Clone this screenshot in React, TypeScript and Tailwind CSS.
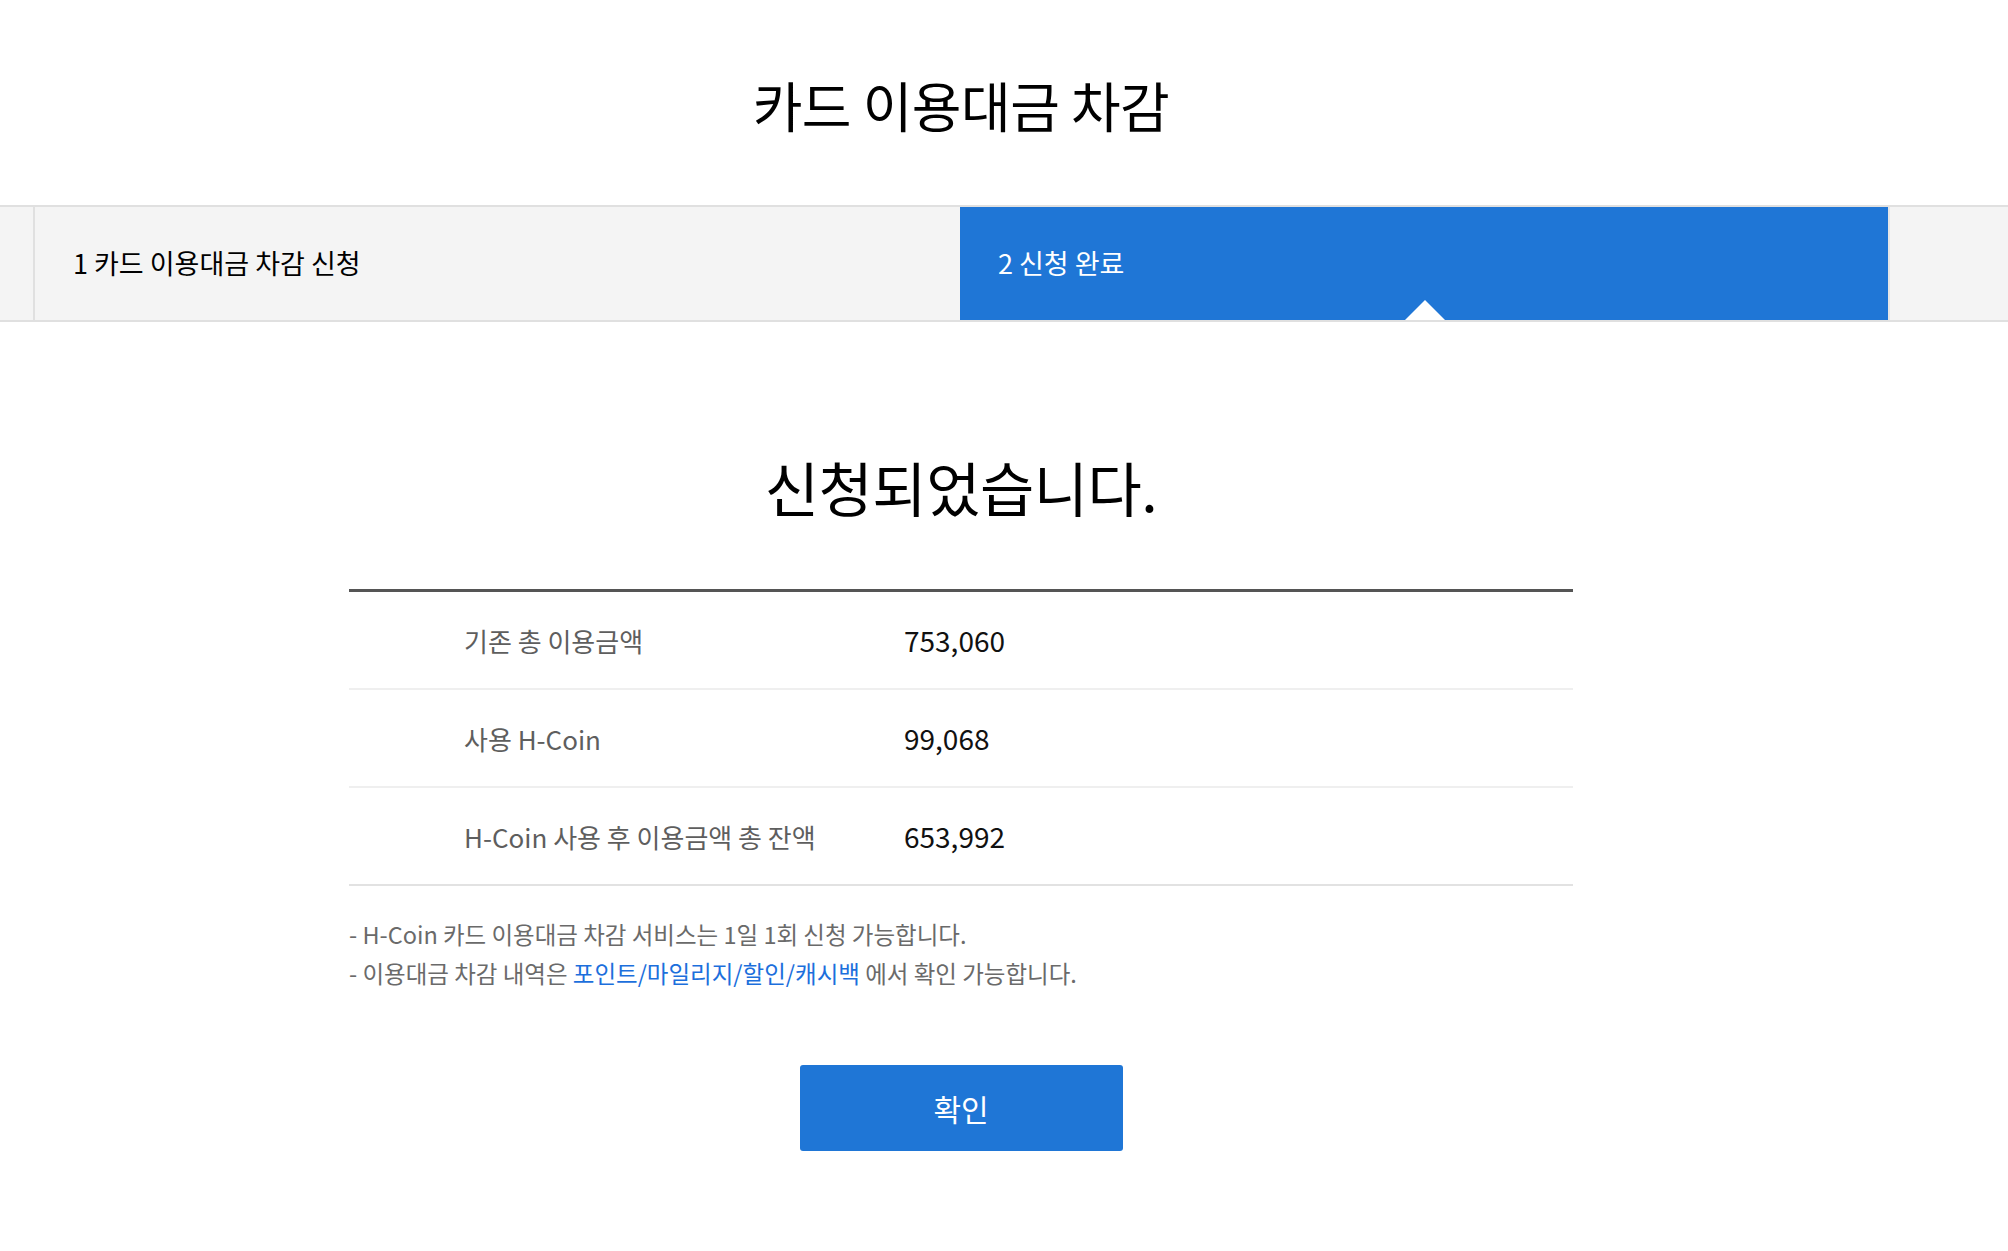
import React from "react";

const rows = [
  { label: "기존 총 이용금액", value: "753,060" },
  { label: "사용 H-Coin", value: "99,068" },
  { label: "H-Coin 사용 후 이용금액 총 잔액", value: "653,992" },
];

export default function App() {
  return (
    <div className="min-h-screen bg-white font-['Noto_Sans_CJK_KR','Noto_Sans',sans-serif] text-[#111]">
      <header className="flex h-[205px] w-[1922px] items-center justify-center pt-1">
        <h1 className="text-[54px] font-normal leading-none tracking-[-0.5px] text-black">카드 이용대금 차감</h1>
      </header>

      {/* steps */}
      <div className="border-y-2 border-[#e0e0e0] bg-[#f4f4f4]">
        <div className="flex w-[1922px] pl-[33px]">
          <div className="flex h-[113px] w-[927px] items-center border-l-2 border-[#e0e0e0] pl-[38px] text-[27px] text-black">
            1 카드 이용대금 차감 신청
          </div>
          <div className="relative flex h-[113px] w-[930px] items-center border-r-2 border-[#e6e6e6] bg-[#1f76d6] pl-[38px] text-[27px] text-white">
            2 신청 완료
            <span className="absolute bottom-0 left-[445px] h-0 w-0 border-x-[20px] border-b-[20px] border-x-transparent border-b-white" />
          </div>
        </div>
      </div>

      <main className="flex w-[1922px] flex-col items-center">
        <h2 className="mt-[135px] text-[59px] font-normal leading-none tracking-[-0.5px] text-black">신청되었습니다.</h2>

        <div className="mt-[73px] w-[1224px] border-t-[3px] border-[#555]">
          {rows.map((row, i) => (
            <div
              key={row.label}
              className={
                "flex h-[98px] items-center border-b-2 " +
                (i === rows.length - 1 ? "border-[#e2e2e2]" : "border-[#efefef]")
              }
            >
              <div className="w-[555px] pl-[115px] text-[26px] text-[#5e5e5e]">{row.label}</div>
              <div className="text-[28px] text-[#111]">{row.value}</div>
            </div>
          ))}
        </div>

        <ul className="mt-[29px] w-[1224px] text-[23.5px] leading-[39px] text-[#6a6a6a]">
          <li>- H-Coin 카드 이용대금 차감 서비스는 1일 1회 신청 가능합니다.</li>
          <li>
            - 이용대금 차감 내역은 <a className="text-[#1c6fdc]">포인트/마일리지/할인/캐시백</a> 에서 확인 가능합니다.
          </li>
        </ul>

        <button className="mt-[72px] h-[86px] w-[323px] rounded-[3px] bg-[#1f76d6] text-[30px] text-white">확인</button>
      </main>
    </div>
  );
}
